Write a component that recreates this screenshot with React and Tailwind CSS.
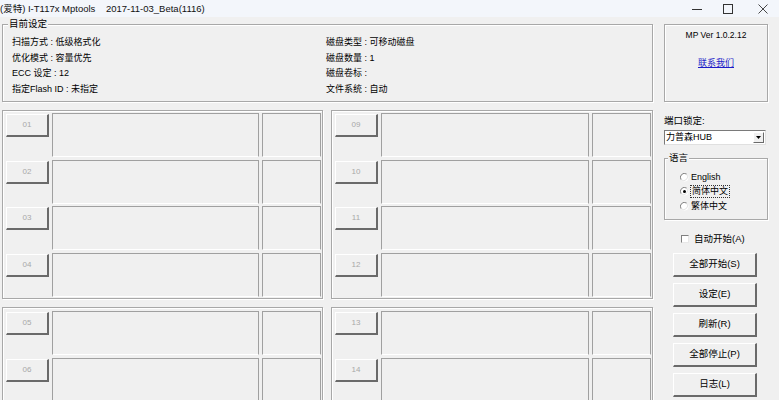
import React from "react";

function PortRow({ n }) {
  return (
    <div className="flex h-[44px] items-start">
      <div className="ml-[3px] mt-[1px] flex h-[23px] w-[43px] items-center justify-center border-l border-t border-b-2 border-r-2 border-l-white border-t-white border-b-[#6a6a6a] border-r-[#6a6a6a] text-[8px] leading-none text-[#a8a8a8]">
        {n}
      </div>
      <div className="ml-[3px] h-[44px] flex-1 border-l border-t border-r border-b border-l-[#a0a0a0] border-t-[#a0a0a0] border-r-[#a0a0a0] border-b-white"></div>
      <div className="ml-[3px] mr-[1px] h-[44px] w-[59px] border-l border-t border-r border-b border-l-[#a0a0a0] border-t-[#a0a0a0] border-r-[#a0a0a0] border-b-white"></div>
    </div>
  );
}

function PortGroup({ ports, cls }) {
  return (
    <div className={cls}>
      {ports.map((p) => (
        <PortRow key={p} n={p} />
      ))}
    </div>
  );
}

function Radio({ checked }) {
  return (
    <svg width="9" height="9" viewBox="0 0 9 9" className="shrink-0">
      <circle cx="4.5" cy="4.5" r="4" fill="#ffffff" />
      <path d="M1.2 6.8 A4 4 0 0 1 6.8 1.2" fill="none" stroke="#808080" strokeWidth="1" />
      <path d="M6.8 1.2 A4 4 0 0 1 1.2 6.8" fill="none" stroke="#e3e3e3" strokeWidth="1" />
      {checked && <circle cx="4.5" cy="4.5" r="1.5" fill="#000000" />}
    </svg>
  );
}

function Btn({ children }) {
  return (
    <div className="flex h-[24px] w-[84px] items-center justify-center border-l border-t border-b-2 border-r-2 border-l-white border-t-white border-b-[#6a6a6a] border-r-[#6a6a6a] bg-[#f0f0f0] text-[9.5px] text-black">
      {children}
    </div>
  );
}

export default function App() {
  const etched =
    "border border-[#a8a8a8] shadow-[inset_1px_1px_0_#ffffff,1px_1px_0_#ffffff]";
  return (
    <div className="relative h-[400px] w-[779px] overflow-hidden bg-[#f0f0f0] font-['Liberation_Sans','Noto_Sans_CJK_SC',sans-serif] text-black">
      {/* Title bar */}
      <div className="flex h-[17px] items-center bg-[#f3f6fb]">
        <span className="whitespace-pre text-[9.5px] leading-none text-[#111]">
          (爱特) I-T117x Mptools    2017-11-03_Beta(1116)
        </span>
        <div className="ml-auto flex items-center">
          <svg width="10" height="10" viewBox="0 0 10 10" className="mr-[21px]">
            <line x1="0" y1="5.5" x2="10" y2="5.5" stroke="#333" strokeWidth="1" />
          </svg>
          <svg width="10" height="10" viewBox="0 0 10 10" className="mr-[25px]">
            <rect x="0.5" y="0.5" width="9" height="9" fill="none" stroke="#333" strokeWidth="1" />
          </svg>
          <svg width="10" height="10" viewBox="0 0 10 10" className="mr-[11px]">
            <line x1="0.5" y1="0.5" x2="9.5" y2="9.5" stroke="#333" strokeWidth="0.9" />
            <line x1="9.5" y1="0.5" x2="0.5" y2="9.5" stroke="#333" strokeWidth="0.9" />
          </svg>
        </div>
      </div>

      <div className="flex pl-[2px] pt-[7px]">
        {/* Main column */}
        <div className="flex w-[651px] flex-col">
          {/* 目前设定 */}
          <div className={`relative h-[78px] ${etched}`}>
            <span className="absolute left-[5px] top-[-7px] bg-[#f0f0f0] px-[1px] text-[9.5px] leading-[12px]">
              目前设定
            </span>
            <div className="grid grid-cols-[314px_1fr] pl-[9px] pt-[10px] text-[9px]">
              <div className="flex flex-col">
                <div className="flex h-[15.5px] items-center">扫描方式 : 低级格式化</div>
                <div className="flex h-[15.5px] items-center">优化模式 : 容量优先</div>
                <div className="flex h-[15.5px] items-center">ECC 设定 : 12</div>
                <div className="flex h-[15.5px] items-center">指定Flash ID : 未指定</div>
              </div>
              <div className="flex flex-col">
                <div className="flex h-[15.5px] items-center">磁盘类型 : 可移动磁盘</div>
                <div className="flex h-[15.5px] items-center">磁盘数量 : 1</div>
                <div className="flex h-[15.5px] items-center">磁盘卷标 :</div>
                <div className="flex h-[15.5px] items-center">文件系统 : 自动</div>
              </div>
            </div>
          </div>

          <div className="mt-[8px] flex gap-[8px]">
            <PortGroup
              ports={["01", "02", "03", "04"]}
              cls={`flex h-[189px] w-[321px] flex-col gap-[2.5px] pt-[2px] ${etched}`}
            />
            <PortGroup
              ports={["09", "10", "11", "12"]}
              cls={`flex h-[189px] w-[322px] flex-col gap-[2.5px] pt-[2px] ${etched}`}
            />
          </div>
          <div className="mt-[8px] flex gap-[8px]">
            <PortGroup
              ports={["05", "06"]}
              cls={`flex h-[189px] w-[321px] flex-col gap-[2.5px] pt-[3px] ${etched}`}
            />
            <PortGroup
              ports={["13", "14"]}
              cls={`flex h-[189px] w-[322px] flex-col gap-[2.5px] pt-[3px] ${etched}`}
            />
          </div>
        </div>

        {/* Right column */}
        <div className="ml-[11px] flex w-[104px] flex-col">
          <div className={`flex h-[78px] flex-col items-center pt-[4px] ${etched}`}>
            <div className="flex h-[12px] items-center text-[8.5px]">MP Ver 1.0.2.12</div>
            <div className="mt-[17px] flex h-[12px] items-center text-[9px] text-[#1c1cc8] underline">
              联系我们
            </div>
          </div>

          <div className="mt-[13px] flex h-[12px] items-center text-[9.5px]">端口锁定:</div>
          <div className="mt-[3px] flex h-[15px] w-[102px] items-center border-l border-t border-r border-b border-l-[#7a7a7a] border-t-[#7a7a7a] border-r-[#e0e0e0] border-b-[#e0e0e0] bg-white">
            <span className="pl-[1px] text-[9px] leading-none">力普森HUB</span>
            <div className="ml-auto mr-[1px] flex h-[11px] w-[11px] items-center justify-center border-l border-t border-b border-r border-l-white border-t-white border-b-[#6a6a6a] border-r-[#6a6a6a] bg-[#f0f0f0]">
              <svg width="5" height="3" viewBox="0 0 5 3">
                <path d="M0 0 L5 0 L2.5 3 Z" fill="#000" />
              </svg>
            </div>
          </div>

          <div className={`relative mt-[13px] h-[62px] ${etched}`}>
            <span className="absolute left-[3px] top-[-7px] bg-[#f0f0f0] px-[1px] text-[9.5px] leading-[12px]">
              语言
            </span>
            <div className="flex flex-col pl-[15px] pt-[11px] text-[9px]">
              <div className="flex h-[14.5px] items-center gap-[2px]">
                <Radio />
                <span>English</span>
              </div>
              <div className="flex h-[14.5px] items-center gap-[1px]">
                <Radio checked />
                <span className="border border-dotted border-[#333] px-[1px] leading-[11px]">简体中文</span>
              </div>
              <div className="flex h-[14.5px] items-center gap-[2px]">
                <Radio />
                <span>繁体中文</span>
              </div>
            </div>
          </div>

          <div className="ml-[17px] mt-[13px] flex h-[12px] items-center gap-[5px] text-[9.5px]">
            <div className="h-[8px] w-[8px] border-l border-t border-r border-b border-l-[#808080] border-t-[#808080] border-r-[#e8e8e8] border-b-[#e8e8e8] bg-white"></div>
            <span>自动开始(A)</span>
          </div>

          <div className="ml-[9px] mt-[8px] flex flex-col gap-[6px]">
            <Btn>全部开始(S)</Btn>
            <Btn>设定(E)</Btn>
            <Btn>刷新(R)</Btn>
            <Btn>全部停止(P)</Btn>
            <Btn>日志(L)</Btn>
          </div>
        </div>
      </div>
    </div>
  );
}
